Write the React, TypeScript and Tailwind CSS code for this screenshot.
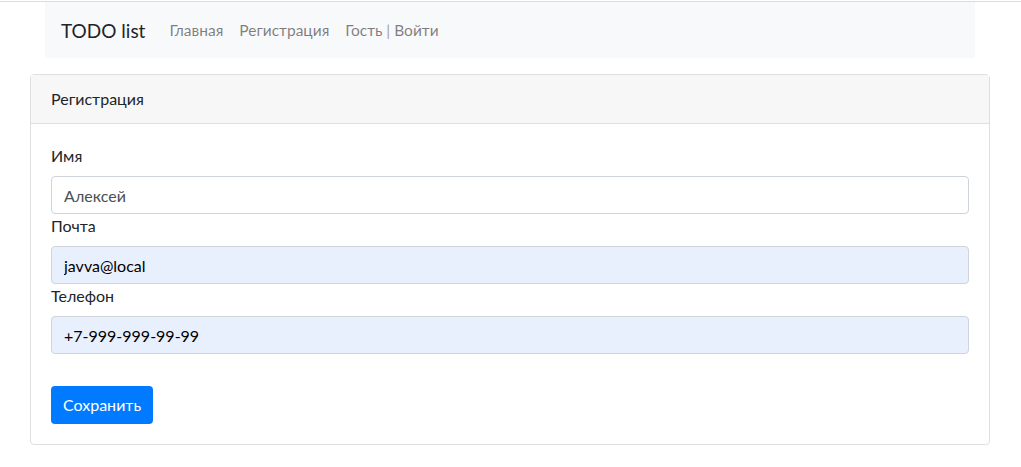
const fields = [
  { label: "Имя", value: "Алексей", autofill: false },
  { label: "Почта", value: "javva@local", autofill: true },
  { label: "Телефон", value: "+7-999-999-99-99", autofill: true },
];

const navLinks = ["Главная", "Регистрация"];

export default function App() {
  return (
    <div className="min-h-[467px] bg-white font-['Lato',sans-serif] text-base text-[#212529]">
      <div className="mt-px h-px bg-[#dcdcdc]" />
      <div className="ml-[30px] w-[960px] px-[15px]">
        <nav className="flex h-[56px] items-center bg-[#f8f9fa] px-4 pt-px">
          <span className="mr-4 text-[19px] leading-[30px] text-[#212529]">TODO list</span>
          <ul className="flex items-center text-[15.5px]">
            {navLinks.map((l) => (
              <li key={l} className="px-2 text-[rgba(0,0,0,0.5)]">
                {l}
              </li>
            ))}
            <li className="px-2 text-[rgba(0,0,0,0.5)]">
              Гость <span className="text-[#a0a0a0]">|</span> Войти
            </li>
          </ul>
        </nav>
      </div>
      <div className="ml-[30px] mt-4 w-[960px] rounded border border-[#dfdfdf]">
        <div className="border-b border-[#dfdfdf] bg-[#f7f7f7] px-5 py-3 leading-6">Регистрация</div>
        <form className="p-5">
          {fields.map((f) => (
            <div key={f.label}>
              <label className="mb-2 block leading-6">{f.label}</label>
              <input
                readOnly
                value={f.value}
                className={`block h-[38px] w-full rounded border border-[#ced4da] px-3 leading-6 outline-none ${
                  f.autofill ? "bg-[#e8f0fe] text-black" : "bg-white text-[#495057]"
                }`}
              />
            </div>
          ))}
          <button
            type="button"
            className="mt-8 h-[38px] rounded bg-[#007bff] px-3 leading-6 text-white"
          >
            Сохранить
          </button>
        </form>
      </div>
    </div>
  );
}
